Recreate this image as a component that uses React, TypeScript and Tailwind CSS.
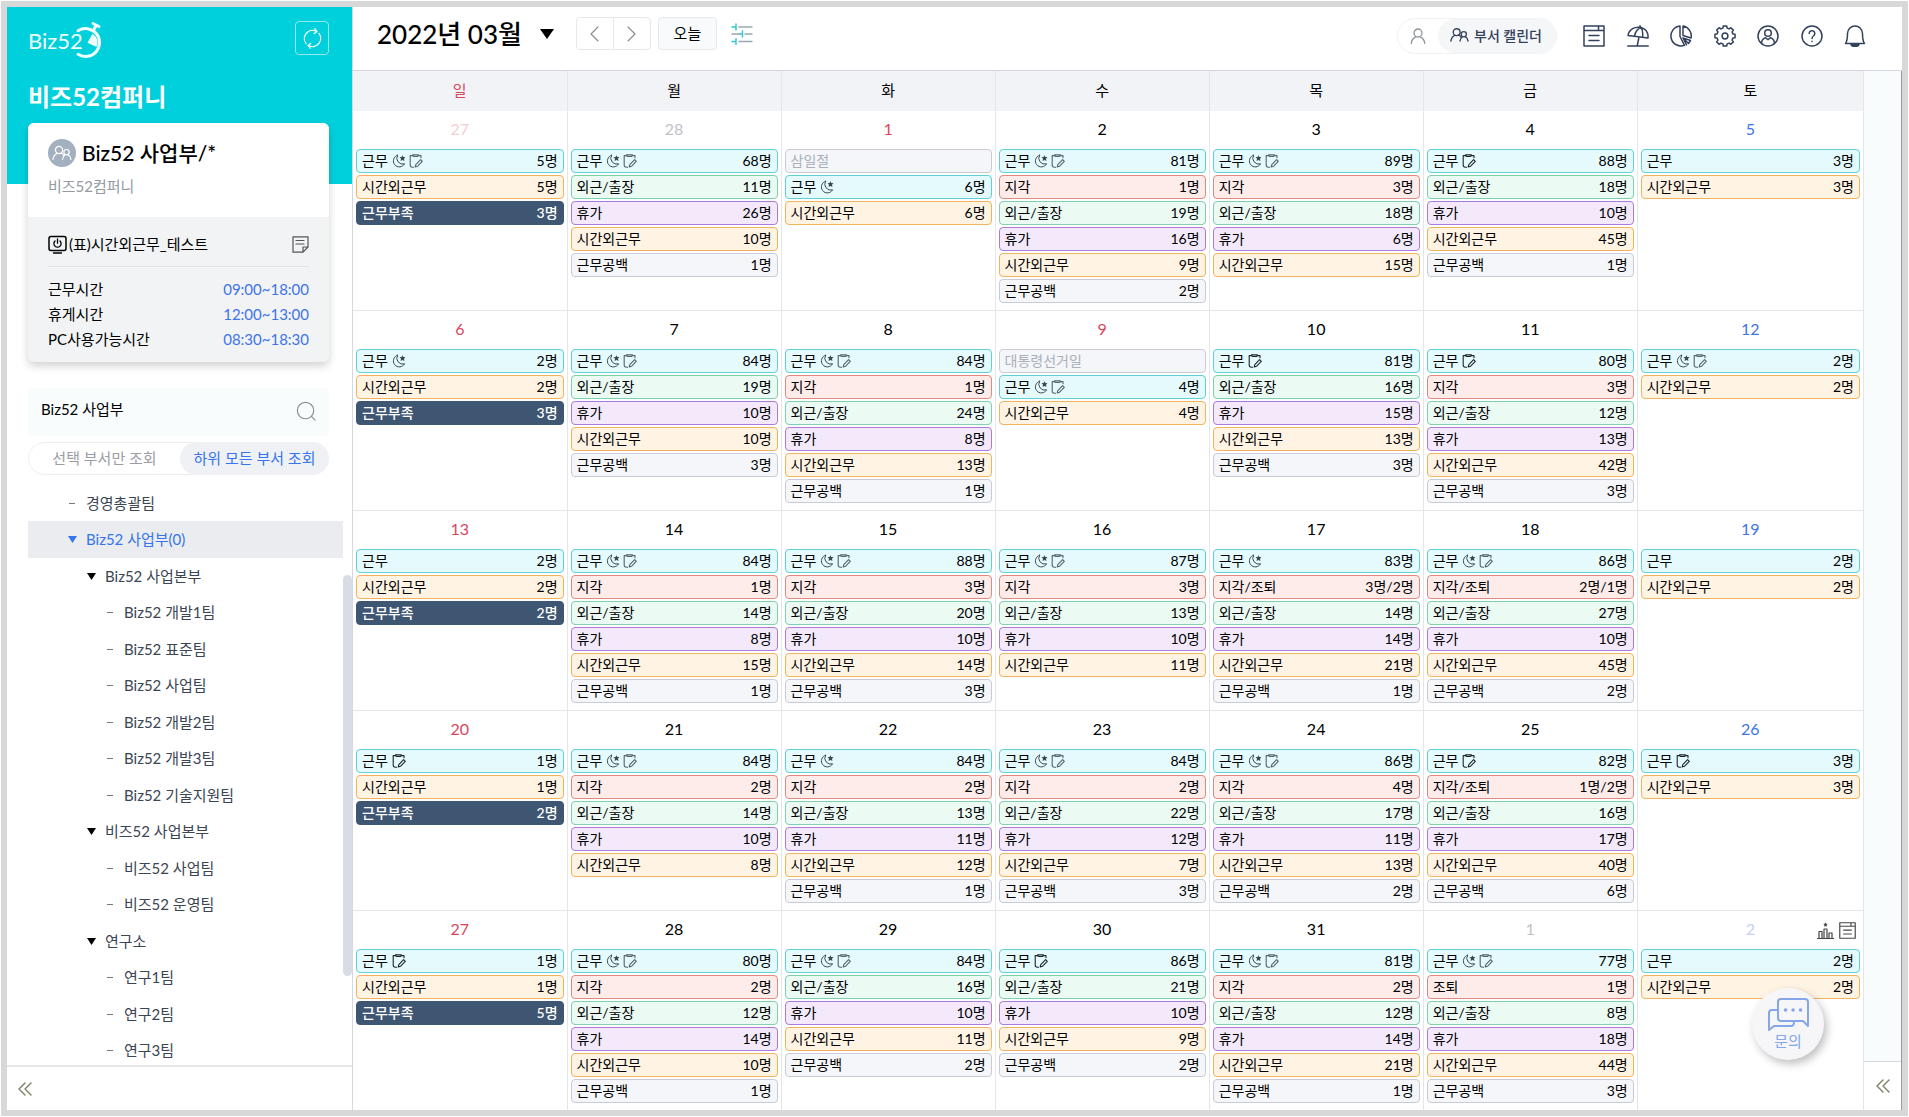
import type { ReactNode } from 'react';
import clsx from 'clsx';

type Kind = 'work' | 'late' | 'out' | 'leave' | 'over' | 'gap' | 'short' | 'holiday';

interface Entry {
  kind: Kind;
  label: string;
  count?: string;
  night?: boolean;
  edited?: boolean;
}

interface Day {
  date: number;
  entries: Entry[];
  off?: boolean;
  outside?: boolean;
}

const KIND_STYLE: Record<Kind, string> = {
  work: 'border-[#5fd0d6] bg-[#e4fafd] text-black',
  late: 'border-[#e08a7f] bg-[#fdecea] text-black',
  out: 'border-[#7fceb0] bg-[#ecfaf4] text-black',
  leave: 'border-[#ac7bd6] bg-[#f3e9fb] text-black',
  over: 'border-[#f0b45c] bg-[#fff3e4] text-black',
  gap: 'border-[#c9ccd4] bg-[#f5f6f9] text-black',
  short: 'border-[#3f5672] bg-[#3f5672] text-white font-medium',
  holiday: 'border-[#c9ccd4] bg-[#f5f6f9] text-[#a9b0bb]',
};

const work = (n: number, icons = ''): Entry => ({
  kind: 'work',
  label: '근무',
  count: `${n}명`,
  night: icons.includes('n'),
  edited: icons.includes('e'),
});
const late = (n: number): Entry => ({ kind: 'late', label: '지각', count: `${n}명` });
const lateEarly = (a: number, b: number): Entry => ({ kind: 'late', label: '지각/조퇴', count: `${a}명/${b}명` });
const early = (n: number): Entry => ({ kind: 'late', label: '조퇴', count: `${n}명` });
const out = (n: number): Entry => ({ kind: 'out', label: '외근/출장', count: `${n}명` });
const leave = (n: number): Entry => ({ kind: 'leave', label: '휴가', count: `${n}명` });
const over = (n: number): Entry => ({ kind: 'over', label: '시간외근무', count: `${n}명` });
const gap = (n: number): Entry => ({ kind: 'gap', label: '근무공백', count: `${n}명` });
const short = (n: number): Entry => ({ kind: 'short', label: '근무부족', count: `${n}명` });
const holiday = (label: string): Entry => ({ kind: 'holiday', label });

const WEEKDAYS = ['일', '월', '화', '수', '목', '금', '토'];

const WEEKS: Day[][] = [
  [
    { date: 27, outside: true, entries: [work(5, 'ne'), over(5), short(3)] },
    { date: 28, outside: true, entries: [work(68, 'ne'), out(11), leave(26), over(10), gap(1)] },
    { date: 1, off: true, entries: [holiday('삼일절'), work(6, 'n'), over(6)] },
    { date: 2, entries: [work(81, 'ne'), late(1), out(19), leave(16), over(9), gap(2)] },
    { date: 3, entries: [work(89, 'ne'), late(3), out(18), leave(6), over(15)] },
    { date: 4, entries: [work(88, 'e'), out(18), leave(10), over(45), gap(1)] },
    { date: 5, entries: [work(3), over(3)] },
  ],
  [
    { date: 6, entries: [work(2, 'n'), over(2), short(3)] },
    { date: 7, entries: [work(84, 'ne'), out(19), leave(10), over(10), gap(3)] },
    { date: 8, entries: [work(84, 'ne'), late(1), out(24), leave(8), over(13), gap(1)] },
    { date: 9, off: true, entries: [holiday('대통령선거일'), work(4, 'ne'), over(4)] },
    { date: 10, entries: [work(81, 'e'), out(16), leave(15), over(13), gap(3)] },
    { date: 11, entries: [work(80, 'e'), late(3), out(12), leave(13), over(42), gap(3)] },
    { date: 12, entries: [work(2, 'ne'), over(2)] },
  ],
  [
    { date: 13, entries: [work(2), over(2), short(2)] },
    { date: 14, entries: [work(84, 'ne'), late(1), out(14), leave(8), over(15), gap(1)] },
    { date: 15, entries: [work(88, 'ne'), late(3), out(20), leave(10), over(14), gap(3)] },
    { date: 16, entries: [work(87, 'ne'), late(3), out(13), leave(10), over(11)] },
    { date: 17, entries: [work(83, 'n'), lateEarly(3, 2), out(14), leave(14), over(21), gap(1)] },
    { date: 18, entries: [work(86, 'ne'), lateEarly(2, 1), out(27), leave(10), over(45), gap(2)] },
    { date: 19, entries: [work(2), over(2)] },
  ],
  [
    { date: 20, entries: [work(1, 'e'), over(1), short(2)] },
    { date: 21, entries: [work(84, 'ne'), late(2), out(14), leave(10), over(8)] },
    { date: 22, entries: [work(84, 'n'), late(2), out(13), leave(11), over(12), gap(1)] },
    { date: 23, entries: [work(84, 'ne'), late(2), out(22), leave(12), over(7), gap(3)] },
    { date: 24, entries: [work(86, 'ne'), late(4), out(17), leave(11), over(13), gap(2)] },
    { date: 25, entries: [work(82, 'e'), lateEarly(1, 2), out(16), leave(17), over(40), gap(6)] },
    { date: 26, entries: [work(3, 'e'), over(3)] },
  ],
  [
    { date: 27, entries: [work(1, 'e'), over(1), short(5)] },
    { date: 28, entries: [work(80, 'ne'), late(2), out(12), leave(14), over(10), gap(1)] },
    { date: 29, entries: [work(84, 'ne'), out(16), leave(10), over(11), gap(2)] },
    { date: 30, entries: [work(86, 'e'), out(21), leave(10), over(9), gap(2)] },
    { date: 31, entries: [work(81, 'ne'), late(2), out(12), leave(14), over(21), gap(1)] },
    { date: 1, outside: true, entries: [work(77, 'ne'), early(1), out(8), leave(18), over(44), gap(3)] },
    { date: 2, outside: true, entries: [work(2), over(2)] },
  ],
];

interface Team {
  name: string;
  depth: 0 | 1 | 2;
  group?: boolean;
  selected?: boolean;
}

const TEAMS: Team[] = [
  { name: '경영총괄팀', depth: 0 },
  { name: 'Biz52 사업부(0)', depth: 0, group: true, selected: true },
  { name: 'Biz52 사업본부', depth: 1, group: true },
  { name: 'Biz52 개발1팀', depth: 2 },
  { name: 'Biz52 표준팀', depth: 2 },
  { name: 'Biz52 사업팀', depth: 2 },
  { name: 'Biz52 개발2팀', depth: 2 },
  { name: 'Biz52 개발3팀', depth: 2 },
  { name: 'Biz52 기술지원팀', depth: 2 },
  { name: '비즈52 사업본부', depth: 1, group: true },
  { name: '비즈52 사업팀', depth: 2 },
  { name: '비즈52 운영팀', depth: 2 },
  { name: '연구소', depth: 1, group: true },
  { name: '연구1팀', depth: 2 },
  { name: '연구2팀', depth: 2 },
  { name: '연구3팀', depth: 2 },
];

const DEPTH_PADDING = ['pl-[39px]', 'pl-[58px]', 'pl-[77px]'];

const HOURS = [
  ['근무시간', '09:00~18:00'],
  ['휴게시간', '12:00~13:00'],
  ['PC사용가능시간', '08:30~18:30'],
];

/* ---------- icons ---------- */

interface IconProps {
  className?: string;
  children?: ReactNode;
  viewBox?: string;
  strokeWidth?: number;
}

function Icon({ className, children, viewBox = '0 0 22 22', strokeWidth = 1.5 }: IconProps) {
  return (
    <svg
      className={clsx('shrink-0', className)}
      viewBox={viewBox}
      fill="none"
      stroke="currentColor"
      strokeWidth={strokeWidth}
      strokeLinecap="round"
      strokeLinejoin="round"
      aria-hidden="true"
    >
      {children}
    </svg>
  );
}

function NightIcon() {
  return (
    <Icon className="size-[14px] text-[#3d4a50]" viewBox="0 0 14 14" strokeWidth={1}>
      <path d="M5.500 1.200A6 6 0 1 0 12.600 9.800A6 6 0 0 1 5.500 1.200Z" />
      <path
        d="m10.500 1.200.9 1.900 2.100.2-1.500 1.500.4 2.100-1.900-1-1.900 1 .4-2.100-1.500-1.500 2.100-.2z"
        fill="currentColor"
        stroke="none"
      />
    </Icon>
  );
}

function EditedIcon({ dark }: { dark?: boolean }) {
  return (
    <Icon
      className={clsx('size-[14px]', dark ? 'text-[#1d2529]' : 'text-[#56646a]')}
      viewBox="0 0 14 14"
      strokeWidth={1.1}
    >
      <path d="M3.500 1.600H1.200v9.400q0 2.200 2.200 2.200h1.200M9.500 1.600h2.500v2.200" />
      <path d="M3.600.7h5.800l-.6 1.700H4.200z" />
      <path d="m6.800 10.600 4.800-4.900 1.700 1.700-4.900 4.900-2.200.6z" />
    </Icon>
  );
}

function PeopleIcon({ className, strokeWidth = 1.4 }: IconProps) {
  return (
    <Icon className={className} viewBox="0 0 20 16" strokeWidth={strokeWidth}>
      <circle cx="7" cy="5" r="3.600" />
      <path d="M1 14.500c.3-3.300 1.800-5 4-6M9 8c1.200.6 2 1.300 2.500 2.300" />
      <circle cx="14.500" cy="7.200" r="2.700" />
      <path d="M10.500 14.500c.2-2.400 1-3.600 2.600-4.700M16 9.800c1.800.9 2.700 2.300 3 4.700" />
    </Icon>
  );
}

function SheetIcon({ className }: { className?: string }) {
  return (
    <Icon className={className}>
      <path d="M1 1h20v20H1zM1 5.500h20M15.500 1v4.500M6 10.500h10M6 15.500h10" />
    </Icon>
  );
}

const GEAR_PATH = (() => {
  const points: string[] = [];
  const teeth = 8;
  for (let i = 0; i < teeth; i++) {
    const mid = (i * 2 * Math.PI) / teeth;
    const corners = [
      [-0.26, 8.2],
      [-0.17, 10.2],
      [0.17, 10.2],
      [0.26, 8.2],
    ];
    for (const [offset, radius] of corners) {
      points.push(`${11 + radius * Math.sin(mid + offset)} ${11 - radius * Math.cos(mid + offset)}`);
    }
  }
  return `M${points.join('L')}Z`;
})();

function CollapseIcon() {
  return (
    <Icon className="size-[14px] text-[#77805f]" viewBox="0 0 14 14" strokeWidth={1.4}>
      <path d="M7 1 1 7l6 6M13 1 7 7l6 6" />
    </Icon>
  );
}

function Logo() {
  return (
    <div className="flex items-center text-[#effeff]" aria-label="Biz52">
      <span className="pt-px text-[22px] leading-9">Biz52</span>
      <svg className="-ml-2 h-10 w-7" viewBox="0 0 28 40" fill="none" stroke="currentColor" aria-hidden="true">
        <path d="M3 10.700A14 14 0 1 1 3 34.300" strokeWidth="3" strokeLinecap="round" />
        <path d="m18 3.500 6 3M21 5.500l-2 4" strokeWidth="3" strokeLinecap="round" />
        <path d="m12.500 22.700 5-9a10 10 0 0 1 4 13.300z" fill="currentColor" stroke="none" />
      </svg>
    </div>
  );
}

/* ---------- sidebar ---------- */

function ProfileCard() {
  return (
    <section className="overflow-hidden rounded-md bg-[#f1f3f5] shadow-[0_4px_8px_rgba(0,0,0,0.18)]">
      <div className="h-[94px] bg-white px-5 pt-[14px]">
        <div className="flex items-center gap-[6px]">
          <span className="flex size-7 items-center justify-center rounded-full bg-[#a3b0bf] text-white">
            <PeopleIcon className="h-4 w-5" strokeWidth={1.2} />
          </span>
          <h2 className="text-[21px] leading-8 font-medium text-black">Biz52 사업부/*</h2>
        </div>
        <p className="mt-[5px] text-[15px] leading-6 text-[#9599a3]">비즈52컴퍼니</p>
      </div>
      <div className="px-5 pt-[15px] pb-[10px]">
        <div className="flex items-center border-b border-[#dfe2e6] pb-[10px] text-[15px] leading-6 text-black">
          <Icon className="mr-[2px] size-[19px]" viewBox="0 0 19 19">
            <rect x="1" y="1.500" width="17" height="14" rx="2" />
            <path d="M5.500 18h8M9.500 4v4.200M7 6a3.600 3.600 0 1 0 5 0" strokeWidth={1.3} />
          </Icon>
          <span>(표)시간외근무_테스트</span>
          <button type="button" aria-label="메모" className="ml-auto text-[#555]">
            <Icon className="size-[17px]" viewBox="0 0 17 17" strokeWidth={1.2}>
              <path d="M1 .8h15V11l-5 5.200H1zM16 11h-5v5.200M4 4.500h8M4 8h8" />
            </Icon>
          </button>
        </div>
        <dl className="mt-[10px] text-[15px] leading-[25px]">
          {HOURS.map(([label, time]) => (
            <div key={label} className="flex justify-between">
              <dt className="text-black">{label}</dt>
              <dd className="text-[#3f74e8]">{time}</dd>
            </div>
          ))}
        </dl>
      </div>
    </section>
  );
}

function TeamTree() {
  return (
    <ul className="mr-[9px] ml-[21px] text-[15px] text-[#3b4554]">
      {TEAMS.map((team) => (
        <li key={team.name} className="h-9 even:h-[37px]">
          <button
            type="button"
            className={clsx(
              'flex h-full w-full items-center gap-[9px] text-left',
              DEPTH_PADDING[team.depth],
              team.selected && 'bg-[#eaecef] text-[#3575ee]',
            )}
          >
            <span className="flex w-[10px] justify-center">
              {team.group ? (
                <svg
                  className={clsx('h-[7px] w-[9px]', team.selected ? 'fill-[#3575ee]' : 'fill-black')}
                  viewBox="0 0 9 7"
                  aria-hidden="true"
                >
                  <path d="M0 0h9L4.500 7z" />
                </svg>
              ) : (
                <span className="h-px w-[6px] bg-[#777]" />
              )}
            </span>
            <span>{team.name}</span>
          </button>
        </li>
      ))}
    </ul>
  );
}

function Sidebar() {
  return (
    <aside className="relative flex w-[346px] shrink-0 flex-col border-r border-[#d5d8de]">
      <div className="-mb-[61px] h-[177px] shrink-0 bg-[#00d0dc] pt-[13px] pr-[23px] pl-[21px]">
        <div className="flex items-start justify-between">
          <Logo />
          <button
            type="button"
            aria-label="새로고침"
            className="mt-px flex size-[34px] items-center justify-center rounded border border-[#8feaf0] text-white"
          >
            <Icon className="size-[21px]" strokeWidth={1.3}>
              <path d="M4.300 16.300A8.500 8.500 0 0 1 14.500 3.300M17.700 5.700A8.500 8.500 0 0 1 7.500 18.700" />
              <path d="m13.500.8 2.300 2.900-3 2M8.500 21.200l-2.300-2.900 3-2" />
            </Icon>
          </button>
        </div>
        <h1 className="mt-5 text-[24px] leading-[34px] font-bold text-white">비즈52컴퍼니</h1>
      </div>

      <div className="relative mr-[23px] ml-[21px] shrink-0">
        <ProfileCard />
        <div className="mt-[26px] flex h-12 items-center rounded bg-[#f8fcfd] pr-[13px] pl-[13px]">
          <input
            type="text"
            aria-label="부서 검색"
            defaultValue="Biz52 사업부"
            className="min-w-0 flex-1 bg-transparent pb-[6px] text-[15px] text-black outline-none"
          />
          <button type="button" aria-label="검색" className="pb-[2px] text-[#8b9096]">
            <Icon className="size-[20px]" strokeWidth={1.3}>
              <circle cx="10.500" cy="10.500" r="9" />
              <path d="m17 17 4 4" />
            </Icon>
          </button>
        </div>
        <div className="mt-[6px] flex h-[33px] rounded-full border border-[#eceef0] bg-white text-[15px]">
          <button type="button" className="w-[151px] text-[#9a9da3]">
            선택 부서만 조회
          </button>
          <button type="button" className="-my-px -mr-px flex-1 rounded-full bg-[#f0f1f4] text-[#3575ee]">
            하위 모든 부서 조회
          </button>
        </div>
      </div>

      <div className="mt-[10px] min-h-0 flex-1 overflow-hidden">
        <TeamTree />
      </div>
      <div className="absolute top-[568px] right-0 h-[401px] w-[9px] rounded-full bg-[#d8dce5]" />

      <div className="flex h-[45px] shrink-0 items-center border-t-2 border-[#e4e6e8] pl-[11px]">
        <button type="button" aria-label="사이드바 접기">
          <CollapseIcon />
        </button>
      </div>
    </aside>
  );
}

/* ---------- top bar ---------- */

const TOOL_BUTTONS: { label: string; icon: ReactNode }[] = [
  { label: '게시판', icon: <SheetIcon className="size-[22px]" /> },
  {
    label: '휴가',
    icon: (
      <Icon className="size-[22px]">
        <path d="M1 10.500C2 4.500 8 1 14 2.500c5 1.500 7.500 5.500 7 10.500zM7.500 11c1-4.500 3.500-7.500 6.500-8.500 1.800 2.500 2 6 1.500 9.800M13 .8l.8 1.500M12 12l-1.800 9M.8 21h20.400" />
      </Icon>
    ),
  },
  {
    label: '통계',
    icon: (
      <Icon className="size-[22px]">
        <path d="M10 1a10 10 0 1 0 4.500 19.300L10 11.500z" />
        <path d="M13 1v9.500l8 2.500a10 10 0 0 0-8-12zM13 13l7.500 2.500-2 3zM13 13l3.500 6.800" />
      </Icon>
    ),
  },
  {
    label: '설정',
    icon: (
      <Icon className="size-[22px]">
        <path d={GEAR_PATH} />
        <circle cx="11" cy="11" r="2.900" />
      </Icon>
    ),
  },
  {
    label: '내 정보',
    icon: (
      <Icon className="size-[22px]">
        <circle cx="11" cy="11" r="10" />
        <circle cx="11" cy="8" r="3.300" />
        <path d="M4.500 18c.4-3 1.800-4.600 4.200-5.200l2.300 2 2.300-2c2.400.6 3.800 2.200 4.200 5.200" />
      </Icon>
    ),
  },
  {
    label: '도움말',
    icon: (
      <Icon className="size-[22px]">
        <circle cx="11" cy="11" r="10" />
        <path d="M8.200 8.500a2.800 2.800 0 1 1 4.600 2.100c-1.100.9-1.800 1.400-1.800 2.900M11 16.200v.2" />
      </Icon>
    ),
  },
  {
    label: '알림',
    icon: (
      <Icon className="size-[22px]">
        <path d="M1.500 18.500h19c-1.500-2-2-4-2-10a7.500 7.500 0 0 0-15 0c0 6-.5 8-2 10z" />
        <path d="M7 19a4 2.500 0 0 0 8 0z" fill="currentColor" />
      </Icon>
    ),
  },
];

function TopBar() {
  return (
    <header className="flex h-16 shrink-0 items-start justify-between border-b border-[#d5d8de] pr-9 pl-6">
      <div className="flex items-center pt-[10px]">
        <button type="button" className="flex items-center gap-[18px] text-black">
          <span className="text-[26px] leading-8 font-medium">2022년 03월</span>
          <svg className="h-[10px] w-[14px] fill-black" viewBox="0 0 14 10" aria-hidden="true">
            <path d="M0 0h14L7 10z" />
          </svg>
        </button>
        <div className="ml-[22px] flex h-[33px] w-[75px] divide-x divide-[#e6e8eb] rounded border border-[#e6e8eb] text-[#8a8a8a]">
          <button type="button" aria-label="이전 달" className="flex flex-1 items-center justify-center">
            <Icon className="h-4 w-[9px]" viewBox="0 0 9 16" strokeWidth={1.1}>
              <path d="M8 1 1 8l7 7" />
            </Icon>
          </button>
          <button type="button" aria-label="다음 달" className="flex flex-1 items-center justify-center">
            <Icon className="h-4 w-[9px]" viewBox="0 0 9 16" strokeWidth={1.1}>
              <path d="m1 1 7 7-7 7" />
            </Icon>
          </button>
        </div>
        <button
          type="button"
          className="ml-[7px] h-[33px] w-[59px] rounded border border-[#e6e8eb] bg-[#f9fafb] text-[15px] text-black"
        >
          오늘
        </button>
        <button type="button" aria-label="필터" className="ml-[14px]">
          <Icon className="size-[22px] text-[#9aa6ae]" strokeWidth={1.4}>
            <path d="M8 4h13M1 11h8M14 11h7M8 18.500h13" />
            <path d="M1 4h4M5 1v6M9 11h2.500M11.500 8v6M1 18.500h4M5 15.500v6" stroke="#2cc6d2" />
          </Icon>
        </button>
      </div>

      <div className="flex items-center gap-[26px] pt-[11px] text-[#33415c]">
        <div className="flex h-9 rounded-full border border-[#f0f2f4]">
          <button type="button" aria-label="개인 캘린더" className="flex w-10 items-center justify-center text-[#8f959c]">
            <Icon className="size-4" viewBox="0 0 16 16" strokeWidth={1.3}>
              <circle cx="8" cy="5" r="4" />
              <path d="M1.200 15.500c.3-3.500 2-5.500 4.600-6.700M10.200 8.800c2.600 1.200 4.300 3.200 4.600 6.700" />
            </Icon>
          </button>
          <button
            type="button"
            className="flex items-center gap-[5px] rounded-full bg-[#f4f6f8] pr-[14px] pb-[2px] pl-3 text-[14px] font-medium"
          >
            <PeopleIcon className="h-4 w-[19px]" />
            부서 캘린더
          </button>
        </div>
        <nav className="flex w-[283px] justify-between">
          {TOOL_BUTTONS.map(({ label, icon }) => (
            <button key={label} type="button" aria-label={label}>
              {icon}
            </button>
          ))}
        </nav>
      </div>
    </header>
  );
}

/* ---------- calendar ---------- */

function dateColor(day: Day, column: number) {
  if (column === 0 || day.off) return day.outside ? 'text-[#f6cdd3]' : 'text-[#d8465c]';
  if (column === 6) return day.outside ? 'text-[#c3d0f5]' : 'text-[#3f74e8]';
  return day.outside ? 'text-[#bfc1c5]' : 'text-black';
}

function Chip({ entry }: { entry: Entry }) {
  return (
    <li
      className={clsx(
        'flex h-6 items-center justify-between rounded border px-[5px] text-[14px] leading-none whitespace-nowrap',
        KIND_STYLE[entry.kind],
      )}
    >
      <span className="flex items-center gap-[3px]">
        <span className="mr-px">{entry.label}</span>
        {entry.night && <NightIcon />}
        {entry.edited && <EditedIcon dark={!entry.night} />}
      </span>
      {entry.count && <span>{entry.count}</span>}
    </li>
  );
}

function Calendar() {
  return (
    <table className="w-full table-fixed border-collapse">
      <colgroup>
        {WEEKDAYS.map((day, i) => (
          <col key={day} className={i < 6 ? 'w-[14.17%]' : undefined} />
        ))}
      </colgroup>
      <thead>
        <tr className="bg-[#f2f3f7]">
          {WEEKDAYS.map((day, i) => (
            <th
              key={day}
              scope="col"
              className={clsx(
                'h-10 border-r border-[#e4e6ea] pb-[2px] text-[15px] font-normal',
                i === 0 ? 'text-[#d8465c]' : 'text-black',
              )}
            >
              {day}
            </th>
          ))}
        </tr>
      </thead>
      <tbody>
        {WEEKS.map((week, w) => (
          <tr key={w} className="border-b border-[#e4e6ea]">
            {week.map((day, i) => (
              <td key={i} className="border-r border-[#e4e6ea] pr-[3px] pb-[7px] pl-[3px] align-top">
                <div className={clsx('relative h-[38px] text-center text-[16px] leading-9', dateColor(day, i))}>
                  {day.date}
                  {w === 4 && i === 6 && (
                    <span className="absolute inset-y-0 right-1 flex items-center gap-[5px] text-[#444]">
                      <button type="button" aria-label="통계">
                        <Icon className="size-[17px]" viewBox="0 0 17 17" strokeWidth={1.2}>
                          <path d="M.5 16.500h16M2 16.500V9.500h3v7M7 16.500V7h3v9.500M12 16.500V11h3v5.500" />
                          <path d="m8.500 .3.7 1.500 1.600.2-1.200 1.100.3 1.700-1.400-.8-1.400.8.3-1.700L6.200 2l1.600-.2z" fill="currentColor" stroke="none" />
                        </Icon>
                      </button>
                      <button type="button" aria-label="목록">
                        <SheetIcon className="size-[17px]" />
                      </button>
                    </span>
                  )}
                </div>
                <ul className="flex flex-col gap-[2px]">
                  {day.entries.map((entry) => (
                    <Chip key={entry.label} entry={entry} />
                  ))}
                </ul>
              </td>
            ))}
          </tr>
        ))}
      </tbody>
    </table>
  );
}

function InquiryButton() {
  return (
    <button
      type="button"
      className="absolute right-[78px] bottom-[50px] flex size-[72px] flex-col items-center justify-center rounded-full bg-[#f6f6f8] text-[#86a6ea] shadow-[3px_4px_8px_rgba(0,0,0,0.25)]"
    >
      <Icon className="h-[33px] w-[41px]" viewBox="0 0 41 33" strokeWidth={2}>
        <path d="M12 1h25q3 0 3 3v24l-5-5H13q-3 0-3-3V4q0-3 3-3z" />
        <path d="M10 12H4q-3 0-3 3v17l5-4h17q3 0 3-4" />
        <path d="M17.500 12h.1M25 12h.1M32.500 12h.1" strokeWidth={3.500} />
      </Icon>
      <span className="text-[15px] leading-5">문의</span>
    </button>
  );
}

export default function App() {
  return (
    <div className="h-screen bg-white p-px font-[Lato,'Noto_Sans_CJK_KR',sans-serif]">
      <div className="relative flex h-full overflow-hidden border-6 border-[#d8d8d8] bg-white">
        <Sidebar />
        <main className="flex min-w-0 flex-1 flex-col">
          <TopBar />
          <div className="flex min-h-0 flex-1">
            <div className="min-w-0 flex-1 overflow-hidden">
              <Calendar />
            </div>
            <div className="flex w-[38px] shrink-0 flex-col justify-end border-r border-[#9a9a9a] bg-[#f9fcfd]">
              <div className="flex h-[49px] items-center justify-center border-t border-[#d5d8de] bg-white">
                <button type="button" aria-label="패널 열기">
                  <CollapseIcon />
                </button>
              </div>
            </div>
          </div>
        </main>
        <InquiryButton />
      </div>
    </div>
  );
}
